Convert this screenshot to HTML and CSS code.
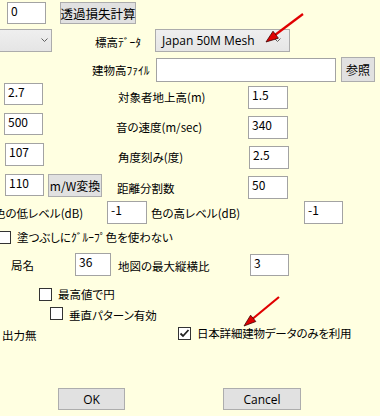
FILE: index.html
```html
<!DOCTYPE html>
<html lang="ja">
<head>
<meta charset="utf-8">
<title>設定</title>
<link rel="stylesheet" href="styles.css">
</head>
<body>
<div class="form">
  <div class="row r1">
    <div class="tb t-zero">0</div>
    <div class="btn b-calc">透過損失計算</div>
  </div>
  <div class="row r2">
    <div class="combo c-left"><span></span><svg class="chev" width="7" height="5" viewBox="0 0 7 5"><polyline points="0.5,0.5 3.5,3.5 6.5,0.5" fill="none" stroke="#606060" stroke-width="1"/></svg></div>
    <div class="lbl l-elev">標高ﾃﾞｰﾀ</div>
    <div class="combo c-mesh"><span class="ctext">Japan 50M Mesh</span><svg class="chev" width="7" height="5" viewBox="0 0 7 5"><polyline points="0.5,0.5 3.5,3.5 6.5,0.5" fill="none" stroke="#606060" stroke-width="1"/></svg></div>
  </div>
  <div class="row r3">
    <div class="lbl l-file">建物高ﾌｧｲﾙ</div>
    <div class="tb t-file"></div>
    <div class="btn b-ref">参照</div>
  </div>
  <div class="row r4">
    <div class="tb t-l">2.7</div>
    <div class="lbl l-mid l-h">対象者地上高(m)</div>
    <div class="tb t-r">1.5</div>
  </div>
  <div class="row r5">
    <div class="tb t-l">500</div>
    <div class="lbl l-mid l-s">音の速度(m/sec)</div>
    <div class="tb t-r">340</div>
  </div>
  <div class="row r6">
    <div class="tb t-l t-l6">107</div>
    <div class="lbl l-mid l-a">角度刻み(度)</div>
    <div class="tb t-r">2.5</div>
  </div>
  <div class="row r7">
    <div class="tb t-l t-l7">110</div>
    <div class="btn b-mw">m/W変換</div>
    <div class="lbl l-mid l-d">距離分割数</div>
    <div class="tb t-r t-r7">50</div>
  </div>
  <div class="row r8">
    <div class="lbl l-low">色の低レベル(dB)</div>
    <div class="tb t-low">-1</div>
    <div class="lbl l-high">色の高レベル(dB)</div>
    <div class="tb t-high">-1</div>
  </div>
  <div class="row r9">
    <div class="cb cb9"></div>
    <div class="lbl l-cb l-fill">塗つぶしにｸﾞﾙｰﾌﾟ色を使わない</div>
  </div>
  <div class="row r10">
    <div class="lbl l-stn">局名</div>
    <div class="tb t-stn">36</div>
    <div class="lbl l-ratio">地図の最大縦横比</div>
    <div class="tb t-ratio">3</div>
  </div>
  <div class="row r11">
    <div class="cb cb11"></div>
    <div class="lbl l-cb l-max">最高値で円</div>
  </div>
  <div class="row r12">
    <div class="cb cb12"></div>
    <div class="lbl l-cb l-vert">垂直パターン有効</div>
  </div>
  <div class="row r13">
    <div class="lbl l-out">出力無</div>
    <div class="cb cb13"><svg width="11" height="11" viewBox="0 0 11 11"><polyline points="1.5,5.5 4,8 9.5,2" fill="none" stroke="#222" stroke-width="1.8"/></svg></div>
    <div class="lbl l-cb l-jp">日本詳細建物データのみを利用</div>
  </div>
  <div class="row r14">
    <div class="btn b-ok">OK</div>
    <div class="btn b-cancel">Cancel</div>
  </div>
  <svg class="arrows" width="389" height="416" viewBox="0 0 389 416">
    <line x1="303" y1="14" x2="275" y2="35" stroke="#e00000" stroke-width="2.2"/>
    <polygon points="266,42 278.4,38.2 273,31.2" fill="#e00000" stroke="#400000" stroke-width="0.8"/>
    <line x1="279" y1="297" x2="253" y2="318.5" stroke="#e00000" stroke-width="2.2"/>
    <polygon points="244,326 255.8,321.5 250.6,315.2" fill="#e00000" stroke="#400000" stroke-width="0.8"/>
  </svg>
</div>
</body>
</html>
```
FILE: styles.css
```css
body {
  margin: 0;
  background: #ffffff;
  font-family: "Noto Sans CJK JP", sans-serif;
  font-size: 11.5px;
  font-feature-settings: "palt";
  color: #000;
}
.form {
  position: relative;
  width: 380px;
  height: 416px;
  background: #ffffe1;
  overflow: hidden;
}
.row {
  display: flex;
  align-items: flex-start;
}
.tb {
  box-sizing: border-box;
  flex: none;
  height: 23px;
  border: 1px solid #a3a3a3;
  background: #fff;
  padding: 0 3px;
  line-height: 16px;
  font-size: 12px;
}
.btn {
  box-sizing: border-box;
  flex: none;
  height: 23px;
  border: 1px solid #adadad;
  background: #e1e1e1;
  display: flex;
  align-items: center;
  justify-content: center;
  white-space: nowrap;
}
.combo {
  box-sizing: border-box;
  flex: none;
  height: 23px;
  border: 1px solid #acacac;
  background: linear-gradient(#efefef, #e5e5e5);
  display: flex;
  align-items: center;
  justify-content: space-between;
}
.chev { flex: none; }
.lbl {
  flex: none;
  line-height: 16px;
  white-space: nowrap;
}
.cb {
  box-sizing: border-box;
  flex: none;
  width: 13px;
  height: 13px;
  border: 1px solid #333;
  background: #fff;
  display: flex;
  align-items: center;
  justify-content: center;
}

/* row 1 */
.r1 { height: 27px; }
.t-zero { margin: 2px 0 0 7px; width: 39px; height: 22px; }
.b-calc { margin: 2px 0 0 14px; width: 76px; height: 22px; font-size: 12.5px; }

/* row 2 */
.r2 { height: 28px; }
.c-left { margin: 2px 0 0 -30px; width: 82px; padding-right: 3px; }
.l-elev { margin: 7px 0 0 43px; width: 57px; }
.c-mesh { margin: 2px 0 0 3px; width: 135px; padding: 0 8px 0 6px; font-family: "Open Sans", "Noto Sans CJK JP", sans-serif; font-size: 12px; }

/* row 3 */
.r3 { height: 28px; }
.l-file { margin: 7px 0 0 92px; width: 64px; }
.t-file { margin: 3px 0 0 0; width: 180px; height: 24px; }
.b-ref { margin: 2px 0 0 5px; width: 34px; height: 25px; font-size: 12px; }

/* rows 4-7 */
.r4, .r5 { height: 30px; }
.r6 { height: 31px; }
.r7 { height: 27px; }
.t-l { margin: 0 0 0 4px; width: 39px; height: 22px; }
.t-l6 { margin-left: 5px; height: 23px; }
.t-l7 { margin-left: 5px; height: 22px; }
.t-r { margin: 3px 0 0 0; width: 40px; height: 23px; }
.t-r7 { margin-top: 2px; }
.l-mid { margin-top: 6px; }
.l-h { margin-left: 75px; width: 130px; }
.l-s { margin-left: 73px; width: 132px; }
.l-a { margin-left: 74px; width: 131px; }
.b-mw { margin: 0 0 0 4px; width: 54px; height: 23px; font-size: 12px; }
.l-d { margin-left: 15px; width: 131px; }

/* row 8 */
.r8 { height: 27px; }
.l-low { margin: 4px 0 0 -6px; width: 113px; }
.t-low { margin: 0; width: 40px; }
.l-high { margin: 4px 0 0 4px; width: 153px; }
.t-high { margin: 0; width: 39px; }

/* checkbox rows */
.r9 { height: 24px; }
.cb9 { margin: 3px 0 0 -2px; }
.l-cb { margin-left: 6px; }
.l-fill { margin-top: 1px; }

.r10 { height: 32px; }
.l-stn { margin: 5px 0 0 11px; width: 64px; }
.t-stn { margin: 1px 0 0 0; width: 36px; }
.l-ratio { margin: 6px 0 0 7px; width: 132px; }
.t-ratio { margin: 2px 0 0 0; width: 39px; height: 22px; }

.r11 { height: 20px; }
.cb11 { margin: 4px 0 0 39px; }
.l-max { margin-top: 2px; }

.r12 { height: 20px; }
.cb12 { margin: 3px 0 0 50px; }
.l-vert { margin-top: 3px; }

.r13 { height: 64px; }
.l-out { margin: 3px 0 0 2px; width: 176px; }
.cb13 { margin: 3px 0 0 0; }
.l-jp { margin-top: 1px; letter-spacing: -0.2px; }

.r14 { height: 28px; }
.b-ok, .b-cancel { height: 22px; font-family: "Open Sans", "Noto Sans CJK JP", sans-serif; font-size: 12px; }
.b-ok { margin-left: 58px; width: 67px; }
.b-cancel { margin-left: 98px; width: 78px; }

.arrows {
  position: absolute;
  left: 0;
  top: 0;
  pointer-events: none;
}
```
